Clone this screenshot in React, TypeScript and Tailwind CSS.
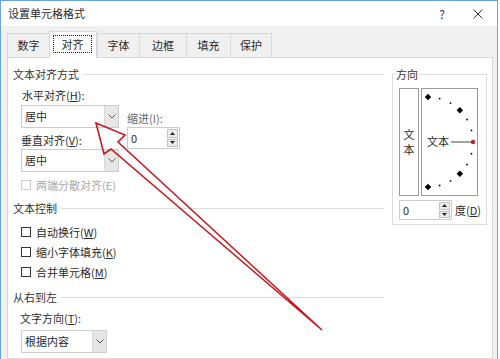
import React from "react";

function Chevron() {
  return (
    <svg width="8" height="5" viewBox="0 0 8 5">
      <path d="M0.5 0.5 L4 4 L7.5 0.5" fill="none" stroke="#606060" strokeWidth="1" />
    </svg>
  );
}

function Combo({ text, width }: { text: string; width: string }) {
  return (
    <div className={"flex h-[23px] border border-[#cccccc] bg-white " + width}>
      <div className="flex flex-1 items-center pl-[3px]">{text}</div>
      <div className="flex w-[14px] items-center justify-center border-l border-[#d8d8d8] bg-[#e6e6e6]">
        <Chevron />
      </div>
    </div>
  );
}

function Spin({ height }: { height: string }) {
  return (
    <div className={"flex w-[53px] border border-[#cccccc] bg-white " + height}>
      <div className="flex flex-1 items-center pl-[3px]">0</div>
      <div className="flex w-[13px] flex-col gap-px p-px">
        <div className="flex flex-1 items-center justify-center border border-[#c2c2c2] bg-[#ececec]">
          <svg width="5" height="3" viewBox="0 0 5 3">
            <path d="M0 3 L2.5 0 L5 3 Z" fill="#222" />
          </svg>
        </div>
        <div className="flex flex-1 items-center justify-center border border-[#c2c2c2] bg-[#ececec]">
          <svg width="5" height="3" viewBox="0 0 5 3">
            <path d="M0 0 L2.5 3 L5 0 Z" fill="#222" />
          </svg>
        </div>
      </div>
    </div>
  );
}

function Header({ text }: { text: string }) {
  return (
    <div className="flex h-[16px] items-center gap-[4px]">
      <span className="text-[#333]">{text}</span>
      <div className="h-px flex-1 bg-[#dcdcdc]" />
    </div>
  );
}

function Check({ label, keyChar, disabled }: { label: string; keyChar: string; disabled?: boolean }) {
  return (
    <div className={"flex h-[20px] items-center gap-[5px] " + (disabled ? "text-[#a8a8a8]" : "text-[#2b2b2b]")}>
      <div className={"h-[10px] w-[10px] border bg-white " + (disabled ? "border-[#cccccc]" : "border-[#333333]")} />
      <span>
        {label}(<span className={disabled ? "" : "underline"}>{keyChar}</span>)
      </span>
    </div>
  );
}

const tabs = [
  { name: "数字", w: "w-[42px]" },
  { name: "对齐", w: "w-[48px]", active: true },
  { name: "字体", w: "w-[42px]" },
  { name: "边框", w: "w-[47px]" },
  { name: "填充", w: "w-[44px]" },
  { name: "保护", w: "w-[42px]" },
];

function Dial() {
  const cx = 6;
  const cy = 53;
  const r = 45;
  const angles = [90, 75, 60, 45, 30, 15, -15, -30, -45, -60, -75, -90];
  return (
    <svg width="55" height="106" viewBox="0 0 55 106">
      {angles.map((a) => {
        const x = cx + r * Math.cos((a * Math.PI) / 180);
        const y = cy - r * Math.sin((a * Math.PI) / 180);
        if (a % 45 === 0) {
          return <rect key={a} x={x - 2.3} y={y - 2.3} width="4.6" height="4.6" fill="#000" transform={`rotate(45 ${x} ${y})`} />;
        }
        return <circle key={a} cx={x} cy={y} r="0.9" fill="#000" />;
      })}
      <text x="5" y="57" fontSize="11" fill="#2b2b2b" fontFamily="'Noto Sans CJK SC', sans-serif">
        文本
      </text>
      <line x1="29" y1="53" x2="49" y2="53" stroke="#444" strokeWidth="1" />
      <circle cx="51" cy="53" r="2.2" fill="#b0262c" />
    </svg>
  );
}

export default function App() {
  return (
    <div className="relative h-[359px] w-[500px] overflow-hidden bg-white font-['Noto_Sans_CJK_SC','Noto_Sans',sans-serif] text-[11px] leading-none text-[#2b2b2b]">
      <div className="flex h-[359px] w-[498px] flex-col border-x border-t border-[#6aa6dc] bg-[#f0f0f0]">
        {/* title bar */}
        <div className="flex h-[25px] shrink-0 items-center bg-white pl-[7px]">
          <span>设置单元格格式</span>
          <span className="ml-auto mr-[28px] text-[12px] text-[#333]">?</span>
          <svg width="10" height="10" viewBox="0 0 10 10" className="mr-[14px]">
            <path d="M0.5 0.5 L9.5 9.5 M9.5 0.5 L0.5 9.5" stroke="#333" strokeWidth="1" />
          </svg>
        </div>

        {/* tabs */}
        <div className="flex h-[31px] shrink-0 items-end pl-[6px]">
          {tabs.map((t) =>
            t.active ? (
              <div key={t.name} className={"relative z-10 -mb-px h-[27px] border-x border-t border-[#d9d9d9] bg-white pb-[5px] pl-[3px] pr-[4px] pt-[3px] " + t.w}>
                <div className="flex h-full items-center justify-center border border-dotted border-[#222]">{t.name}</div>
              </div>
            ) : (
              <div key={t.name} className={"flex h-[24px] items-center justify-center border-l border-t border-[#d9d9d9] last:border-r " + t.w}>
                {t.name}
              </div>
            )
          )}
        </div>

        {/* panel */}
        <div className="ml-[6px] mr-[4px] flex flex-1 border border-[#d9d9d9] bg-white pl-[5px] pt-[8px]">
          <div className="flex w-[371px] flex-col">
            <Header text="文本对齐方式" />
            <div className="ml-[8px] mt-[5px] flex">
              <div className="flex w-[98px] flex-col">
                <div className="flex h-[16px] items-center pl-[1px]">
                  水平对齐(<span className="underline">H</span>):
                </div>
                <div className="mt-[2px]">
                  <Combo text="居中" width="w-[98px]" />
                </div>
                <div className="mt-[4px] flex h-[16px] items-center">
                  垂直对齐(<span className="underline">V</span>):
                </div>
                <div className="mt-[1px]">
                  <Combo text="居中" width="w-[98px]" />
                </div>
              </div>
              <div className="ml-[8px] flex flex-col pt-[23px]">
                <div className="flex h-[16px] items-center text-[#666]">缩进(I):</div>
                <div className="mt-px">
                  <Spin height="h-[22px]" />
                </div>
              </div>
            </div>
            <div className="ml-[8px] mt-[3px]">
              <Check label="两端分散对齐" keyChar="E" disabled />
            </div>

            <div className="mt-[5px]">
              <Header text="文本控制" />
            </div>
            <div className="ml-[8px] mt-[6px] flex flex-col">
              <Check label="自动换行" keyChar="W" />
              <Check label="缩小字体填充" keyChar="K" />
              <Check label="合并单元格" keyChar="M" />
            </div>

            <div className="mt-[7px]">
              <Header text="从右到左" />
            </div>
            <div className="ml-[7px] mt-[5px] flex h-[16px] items-center">
              文字方向(<span className="underline">T</span>):
            </div>
            <div className="ml-[8px] mt-[4px]">
              <Combo text="根据内容" width="w-[86px]" />
            </div>
          </div>

          {/* direction */}
          <div className="ml-[8px]">
            <fieldset className="h-[159px] w-[95px] border border-[#dcdcdc] pl-[1px]">
              <legend className="ml-[1px] px-[1px] leading-[16px] text-[#333]">方向</legend>
              <div className="pl-[5px] pt-[6px]">
                <div className="flex gap-[2px]">
                  <div className="flex h-[108px] w-[20px] flex-col items-center justify-center border border-[#9a9a9a] leading-[15px]">
                    <span>文</span>
                    <span>本</span>
                  </div>
                  <div className="h-[108px] w-[57px] border border-[#9a9a9a]">
                    <Dial />
                  </div>
                </div>
                <div className="mt-[4px] flex items-center">
                  <Spin height="h-[20px]" />
                  <span className="ml-[3px]">
                    度(<span className="underline">D</span>)
                  </span>
                </div>
              </div>
            </fieldset>
          </div>
        </div>
      </div>

      {/* red annotation arrow */}
      <svg className="pointer-events-none absolute left-0 top-0" width="500" height="359" viewBox="0 0 500 359">
        <polygon
          points="96,123 125,135 118,142 322,330 111,149 104,154"
          fill="none"
          stroke="#c41a20"
          strokeWidth="1.6"
          strokeLinejoin="miter"
        />
      </svg>
    </div>
  );
}
